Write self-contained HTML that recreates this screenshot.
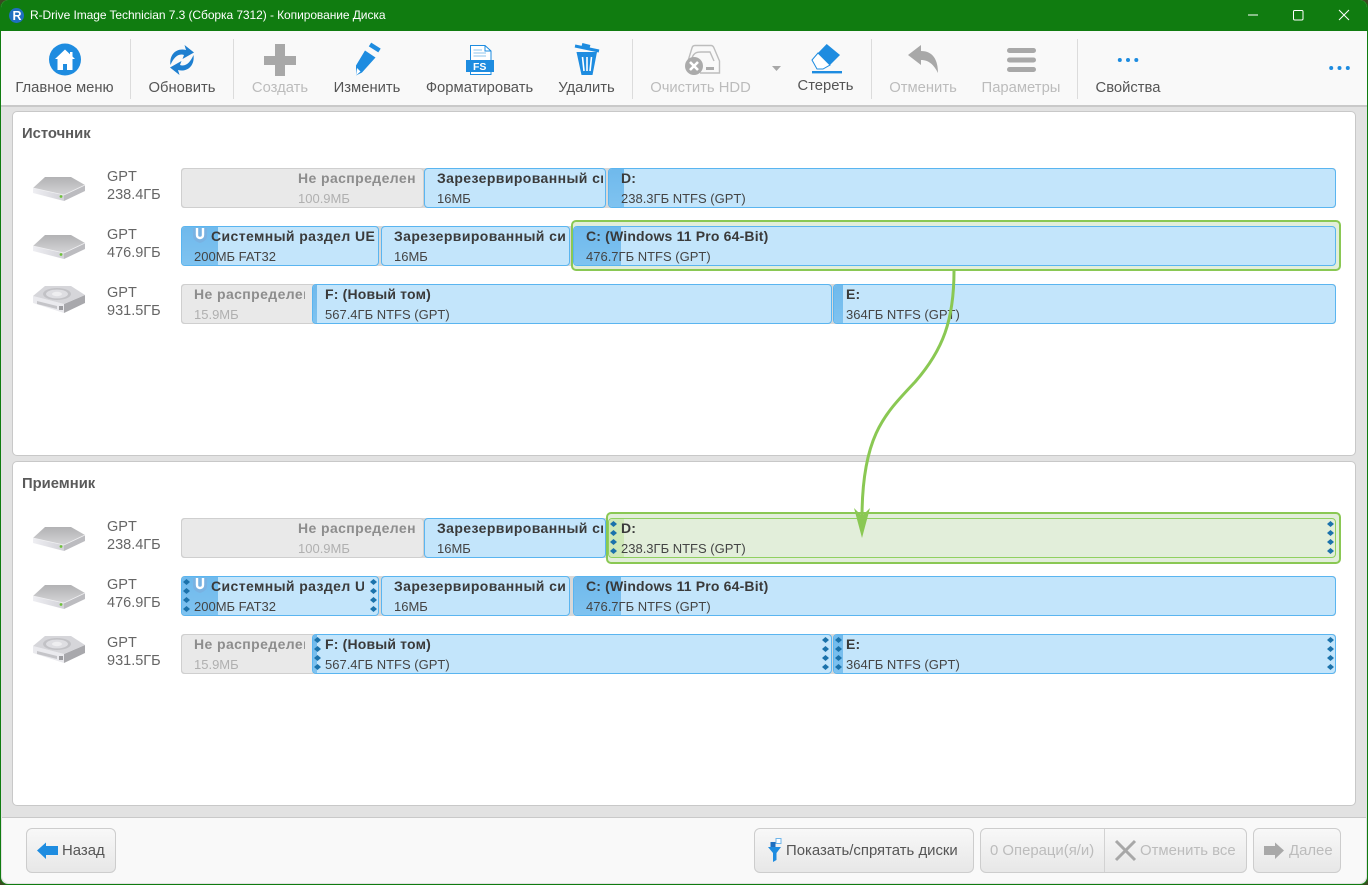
<!DOCTYPE html>
<html lang="ru"><head><meta charset="utf-8"><title>R-Drive Image Technician</title>
<style>
*{box-sizing:border-box}
html,body{margin:0;padding:0;width:1368px;height:885px;overflow:hidden;background:#3a4a20}
body{font:14px "Liberation Sans",sans-serif;color:#555;position:relative}
#win{position:absolute;inset:0;background:#e2e2e2;border-radius:8px;overflow:hidden;border:solid #107c10;border-width:0 1.5px 1.5px 1.5px}
.a{position:absolute}
#title{left:-2px;top:0;width:1372px;height:31px;background:#107c10}
#tt{left:30px;top:8px;color:#fff;font-size:12px;line-height:15px;white-space:nowrap;letter-spacing:-.07px}
#tb{left:-2px;top:31px;width:1372px;height:76px;background:#f9f9f9;border-bottom:2px solid #c9c9c9}
.sep{position:absolute;top:39px;width:1px;height:60px;background:#dcdcdc}
.lb{position:absolute;top:79px;height:18px;line-height:18px;text-align:center;white-space:nowrap;font-size:14.8px;color:#555;transform:translateX(-50%)}
.dis{color:#bcbcbc}
.panel{position:absolute;left:12px;width:1344px;background:#fff;border:1px solid #c8c8c8;border-radius:5px}
.h{position:absolute;left:22px;font-weight:bold;font-size:14.8px;color:#5a5a5a;line-height:16px}
.di{position:absolute;left:107px;font-size:14.5px;line-height:18px;color:#666;white-space:nowrap}
.trk{position:absolute;left:180px;width:1155px;height:40px;background:#d8d8d8;border-radius:3px}
.p{position:absolute;height:40px;background:#c3e5fb;border:1px solid #5ab5f0;border-radius:4px;overflow:hidden}
.p.u{background:#e9e9e9;border-color:#cfcfcf}
.p.g{background:#e2eeda;border-color:#90d060}
.f{position:absolute;left:0;top:0;bottom:0;background:linear-gradient(#6fb9ec,#7fc3f0)}
.g .f{background:#cfe8b8}
.n,.s{position:absolute;white-space:nowrap;overflow:hidden;line-height:17px}
.n{top:1px;font-size:14px;font-weight:bold;color:#3a3a3a;letter-spacing:.17px}
.n.w{letter-spacing:.4px}
.s{top:21px;font-size:13px;color:#444}
.u .n{color:#8d8d8d}.u .s{color:#b0b0b0}
.sel{position:absolute;border:2.5px solid #8ac853;border-radius:5px;background:#e2eeda}
.btn{position:absolute;top:828px;height:45px;border:1px solid #cdcdcd;border-radius:6px;background:linear-gradient(#f8f8f8,#e7e7e7);font-size:14.9px;line-height:45px;white-space:nowrap;color:#555}
.btn.dis{color:#bcbcbc}
.t{position:absolute;top:0}
svg{position:absolute;overflow:visible}
</style></head><body>
<svg width="0" height="0" style="position:absolute"><defs>
<linearGradient id="gt" x1="0" y1="0" x2="0" y2="1"><stop offset="0" stop-color="#b2b2b4"/><stop offset="1" stop-color="#d4d4d6"/></linearGradient>
<linearGradient id="gf" x1="0" y1="0" x2="1" y2="0"><stop offset="0" stop-color="#eeeef2"/><stop offset="1" stop-color="#d2d2d8"/></linearGradient>
<symbol id="hd" viewBox="0 0 53 25" width="53" height="25">
<path d="M0 11 31 18V24L0 16Z" fill="url(#gf)"/>
<path d="M31 18 52 8V14L31 24Z" fill="#bcbcc0"/>
<path d="M12 0H38L52 8 31 18 0 11Z" fill="url(#gt)"/>
<path d="M0 11 31 18 52 8" fill="none" stroke="#f0f0f2" stroke-width=".8"/>
<circle cx="28" cy="19.5" r="1.4" fill="#6fc23a"/>
</symbol>
<symbol id="hd2" viewBox="0 0 53 28" width="53" height="28">
<path d="M0 10 31 18V27L0 17Z" fill="#eaeaee"/>
<path d="M31 18 52 9V17L31 27Z" fill="#a8a8ac"/>
<path d="M12 0H38L52 9 31 18 0 10Z" fill="#d6d6da"/>
<ellipse cx="24" cy="8" rx="14" ry="6" fill="#c2c2c6"/>
<ellipse cx="24" cy="8" rx="11" ry="4.4" fill="#dedee2"/>
<ellipse cx="24" cy="8" rx="5" ry="2.2" fill="#eeeef0"/>
<path d="M4 15 24 20V23L4 18Z" fill="#c4c4c8"/>
<rect x="26" y="20" width="4" height="4" fill="#9c9ca0"/>
</symbol>
<symbol id="dt" viewBox="0 0 7 36" width="7" height="36">
<g fill="#1b72ab"><path d="M3.5 0 7 3 3.5 6 0 3Z"/><path d="M3.5 9 7 12 3.5 15 0 12Z"/><path d="M3.5 18 7 21 3.5 24 0 21Z"/><path d="M3.5 27 7 30 3.5 33 0 30Z"/></g>
</symbol>
<symbol id="sh" viewBox="0 0 14 15" width="14" height="15">
<path d="M0 0H14V8C14 12 10 14 7 15 4 14 0 12 0 8Z" fill="#79b2e2"/>
<path d="M4 0V7C4 11 10 11 10 7V0" fill="none" stroke="#fff" stroke-width="2.4"/>
</symbol>
</defs></svg>

<div id="win">
<div class="a" id="title"></div>
<div class="a" id="tb"></div>
</div>

<!-- title -->
<svg style="left:0;top:0" width="1368" height="31">
<circle cx="16.5" cy="15.5" r="7.5" fill="#1f6fc0"/><text x="12.5" y="20" font-family="Liberation Sans" font-weight="bold" font-size="12.5" fill="#fff">R</text>
<path d="M1248 15H1258" stroke="#fff" stroke-width="1"/>
<rect x="1293.5" y="10.5" width="9.5" height="9.5" rx="1.2" fill="none" stroke="#fff"/>
<path d="M1339 10 1349 20M1349 10 1339 20" stroke="#fff"/>
</svg>
<div class="a" id="tt">R-Drive Image Technician 7.3 (Сборка 7312) - Копирование Диска</div>

<!-- toolbar -->
<div class="sep" style="left:130px"></div><div class="sep" style="left:233px"></div><div class="sep" style="left:632px"></div><div class="sep" style="left:871px"></div><div class="sep" style="left:1077px"></div>
<svg style="left:0;top:0" width="1368" height="100">
<circle cx="65" cy="59.5" r="16" fill="#1e8ce0"/>
<path d="M65 49.5 55 59H57.5V70H63V64H67V70H72.5V59H75L72.5 56.5V52H70V54.2Z" fill="#fff"/>
<g fill="#1e7fd0"><path id="ra" d="M170.5 65C169 54 177 47.5 186 50L184.5 45 194 52.5 182.5 59 184 55C178 53 173.5 58 170.5 65Z"/><use href="#ra" transform="rotate(180 182 60)"/></g>
<path d="M275 44H285V56H296V65H285V76H275V65H264V56H275Z" fill="#a8a8a8"/>
<path d="M365 50.5 375.5 57.5 362 72.5 356 75.5 356 65.5Z" fill="#1e8ce0"/>
<path d="M357 68 360.5 71.5 356 75.5Z" fill="#fff"/>
<path d="M370 44.5 379.5 50.5" stroke="#1e8ce0" stroke-width="4.5"/>
<path d="M470.5 60V45.5H485L491 51V60M470.5 72V74.5H491V72" fill="#fff" stroke="#1e8ce0"/>
<path d="M485 45.5V51H491" fill="none" stroke="#1e8ce0"/>
<path d="M473.5 50H482M473.5 53H486M473.5 56H486" stroke="#8cc4ee"/>
<rect x="466" y="60" width="28" height="12" fill="#1e8ce0"/>
<text x="473" y="70" font-family="Liberation Sans" font-weight="bold" font-size="10.5" fill="#fff">FS</text>
<path d="M575 46 599 51" stroke="#1e8ce0" stroke-width="3"/><path d="M582 44.5 590 46.5" stroke="#1e8ce0" stroke-width="3"/>
<path d="M576.5 52H597L592.5 75H581.5Z" fill="#1e8ce0"/>
<path d="M582.5 57 584 71M587 57V71M591.5 57 590 71" stroke="#fff" stroke-width="1.6"/>
<path d="M688 61 692 48Q692.5 45.5 695 45.5H711Q713 45.5 714 48L719.5 61V73H700M692 58C694 52 698 52 701 52H710L714 61" fill="none" stroke="#bdbdbd" stroke-width="1.4"/>
<circle cx="694" cy="66" r="9" fill="#ababab"/>
<path d="M690 62 698 70M698 62 690 70" stroke="#fff" stroke-width="2.6"/>
<rect x="706" y="67" width="8" height="3" fill="#ababab"/>
<path d="M772 66H781L776.5 71Z" fill="#a8a8a8"/>
<path d="M826.7 44 840 55 830 65 818 53Z" fill="#1e8ce0"/>
<path d="M812 60 818 53 830 65 823 69H817Z" fill="#fff" stroke="#1e8ce0"/>
<rect x="812" y="71" width="30" height="2.4" fill="#1e8ce0"/>
<path d="M908 55 921 45V51C933 51 938 60 938 73 934 65 929 60 921 60V65Z" fill="#a8a8a8"/>
<rect x="1007" y="48" width="29" height="5" rx="2.5" fill="#a8a8a8"/><rect x="1007" y="57.5" width="29" height="5" rx="2.5" fill="#a8a8a8"/><rect x="1007" y="67" width="29" height="5" rx="2.5" fill="#a8a8a8"/>
<g fill="#1e8ce0"><circle cx="1119.8" cy="60" r="2"/><circle cx="1128" cy="60" r="2"/><circle cx="1136.3" cy="60" r="2"/><circle cx="1331.2" cy="68" r="2"/><circle cx="1339.5" cy="68" r="2"/><circle cx="1347.8" cy="68" r="2"/></g>
</svg>
<div class="lb" style="left:64.5px">Главное меню</div>
<div class="lb" style="left:182px">Обновить</div>
<div class="lb dis" style="left:280px">Создать</div>
<div class="lb" style="left:367px">Изменить</div>
<div class="lb" style="left:479.5px">Форматировать</div>
<div class="lb" style="left:586.5px">Удалить</div>
<div class="lb dis" style="left:700.5px">Очистить HDD</div>
<div class="lb" style="left:825.5px;top:77px">Стереть</div>
<div class="lb dis" style="left:923px">Отменить</div>
<div class="lb dis" style="left:1021px">Параметры</div>
<div class="lb" style="left:1128px">Свойства</div>

<!-- source panel -->
<div class="panel" style="top:111px;height:345px"></div>
<div class="h" style="top:126px">Источник</div>
<svg style="left:33px;top:177px" width="53" height="25"><use href="#hd"/></svg>
<svg style="left:33px;top:235px" width="53" height="25"><use href="#hd"/></svg>
<svg style="left:33px;top:286px" width="53" height="28"><use href="#hd2"/></svg>
<div class="di" style="top:168px">GPT<br>238.4ГБ</div>
<div class="di" style="top:226px">GPT<br>476.9ГБ</div>
<div class="di" style="top:284px">GPT<br>931.5ГБ</div>

<div class="trk" style="top:168px;left:181px"></div>
<div class="p u" style="left:181px;top:168px;width:243px"><div class="n w" style="left:116px;width:119px">Не распределен</div><div class="s" style="left:116px">100.9МБ</div></div>
<div class="p" style="left:424px;top:168px;width:182px"><div class="n w" style="left:12px;width:166px">Зарезервированный си</div><div class="s" style="left:12px">16МБ</div></div>
<div class="p" style="left:608px;top:168px;width:728px"><div class="f" style="width:15px"></div><div class="n" style="left:12px">D:</div><div class="s" style="left:12px">238.3ГБ NTFS (GPT)</div></div>

<div class="trk" style="top:226px;left:181px"></div>
<div class="sel" style="left:571px;top:220px;width:770px;height:51px"></div>
<div class="p" style="left:181px;top:226px;width:198px"><div class="f" style="width:36px"></div><div class="n w" style="left:29px;width:164px">Системный раздел UEFI</div><div class="s" style="left:12px">200МБ FAT32</div></div>
<svg style="left:193px;top:228px" width="14" height="15"><use href="#sh"/></svg>
<div class="p" style="left:381px;top:226px;width:189px"><div class="n w" style="left:12px;width:172px">Зарезервированный сис</div><div class="s" style="left:12px">16МБ</div></div>
<div class="p" style="left:573px;top:226px;width:763px"><div class="f" style="width:47px"></div><div class="n" style="left:12px">C: (Windows 11 Pro 64-Bit)</div><div class="s" style="left:12px">476.7ГБ NTFS (GPT)</div></div>

<div class="trk" style="top:284px;left:181px"></div>
<div class="p u" style="left:181px;top:284px;width:134px"><div class="n w" style="left:12px;width:111px">Не распределен</div><div class="s" style="left:12px">15.9МБ</div></div>
<div class="p" style="left:312px;top:284px;width:520px"><div class="f" style="width:4px"></div><div class="n" style="left:12px">F: (Новый том)</div><div class="s" style="left:12px">567.4ГБ NTFS (GPT)</div></div>
<div class="p" style="left:833px;top:284px;width:503px"><div class="f" style="width:9px"></div><div class="n" style="left:12px">E:</div><div class="s" style="left:12px">364ГБ NTFS (GPT)</div></div>

<!-- target panel -->
<div class="panel" style="top:461px;height:345px"></div>
<div class="h" style="top:476px">Приемник</div>
<svg style="left:33px;top:527px" width="53" height="25"><use href="#hd"/></svg>
<svg style="left:33px;top:585px" width="53" height="25"><use href="#hd"/></svg>
<svg style="left:33px;top:636px" width="53" height="28"><use href="#hd2"/></svg>
<div class="di" style="top:518px">GPT<br>238.4ГБ</div>
<div class="di" style="top:576px">GPT<br>476.9ГБ</div>
<div class="di" style="top:634px">GPT<br>931.5ГБ</div>

<div class="trk" style="top:518px;left:181px"></div>
<div class="sel" style="left:606px;top:512px;width:735px;height:51.5px"></div>
<div class="p u" style="left:181px;top:518px;width:243px"><div class="n w" style="left:116px;width:119px">Не распределен</div><div class="s" style="left:116px">100.9МБ</div></div>
<div class="p" style="left:424px;top:518px;width:182px"><div class="n w" style="left:12px;width:166px">Зарезервированный си</div><div class="s" style="left:12px">16МБ</div></div>
<div class="p g" style="left:608px;top:518px;width:728px"><div class="f" style="width:15px"></div><div class="n" style="left:12px">D:</div><div class="s" style="left:12px">238.3ГБ NTFS (GPT)</div></div>

<div class="trk" style="top:576px;left:181px"></div>
<div class="p" style="left:181px;top:576px;width:198px"><div class="f" style="width:36px"></div><div class="n w" style="left:29px;width:153px">Системный раздел UEFI</div><div class="s" style="left:12px">200МБ FAT32</div></div>
<svg style="left:193px;top:578px" width="14" height="15"><use href="#sh"/></svg>
<div class="p" style="left:381px;top:576px;width:189px"><div class="n w" style="left:12px;width:172px">Зарезервированный сис</div><div class="s" style="left:12px">16МБ</div></div>
<div class="p" style="left:573px;top:576px;width:763px"><div class="f" style="width:47px"></div><div class="n" style="left:12px">C: (Windows 11 Pro 64-Bit)</div><div class="s" style="left:12px">476.7ГБ NTFS (GPT)</div></div>

<div class="trk" style="top:634px;left:181px"></div>
<div class="p u" style="left:181px;top:634px;width:134px"><div class="n w" style="left:12px;width:111px">Не распределен</div><div class="s" style="left:12px">15.9МБ</div></div>
<div class="p" style="left:312px;top:634px;width:520px"><div class="f" style="width:4px"></div><div class="n" style="left:12px">F: (Новый том)</div><div class="s" style="left:12px">567.4ГБ NTFS (GPT)</div></div>
<div class="p" style="left:833px;top:634px;width:503px"><div class="f" style="width:9px"></div><div class="n" style="left:12px">E:</div><div class="s" style="left:12px">364ГБ NTFS (GPT)</div></div>

<svg style="left:609.5px;top:521px" width="7" height="36"><use href="#dt"/></svg>
<svg style="left:1326.5px;top:521px" width="7" height="36"><use href="#dt"/></svg>
<svg style="left:182.5px;top:579px" width="7" height="36"><use href="#dt"/></svg>
<svg style="left:369.5px;top:579px" width="7" height="36"><use href="#dt"/></svg>
<svg style="left:313.5px;top:637px" width="7" height="36"><use href="#dt"/></svg>
<svg style="left:821.5px;top:637px" width="7" height="36"><use href="#dt"/></svg>
<svg style="left:834.5px;top:637px" width="7" height="36"><use href="#dt"/></svg>
<svg style="left:1326.5px;top:637px" width="7" height="36"><use href="#dt"/></svg>

<!-- arrow -->
<svg style="left:0;top:0" width="1368" height="885">
<path d="M954 271C954 320 943 350 915 382 885 414 862 435 862 518" fill="none" stroke="#8ac853" stroke-width="3"/>
<path d="M854 508 862 516 870 508 862 538Z" fill="#8ac853"/>
</svg>

<!-- bottom -->
<div class="a" style="left:2px;top:817px;width:1364px;height:66px;background:#f9f9f9;border-top:1px solid #c9c9c9;border-radius:0 0 7px 7px"></div>
<div class="btn" style="left:26px;width:90px"><span class="t" style="left:35px">Назад</span></div>
<div class="btn" style="left:754px;width:220px"><span class="t" style="left:31px">Показать/спрятать диски</span></div>
<div class="btn dis" style="left:980px;width:267px"><span class="t" style="left:9px">0 Операци(я/и)</span><span class="a" style="left:123px;top:0;height:43px;width:1px;background:#d2d2d2"></span><span class="t" style="left:159px">Отменить все</span></div>
<div class="btn dis" style="left:1253px;width:88px"><span class="t" style="left:35px">Далее</span></div>
<svg style="left:0;top:0" width="1368" height="885">
<path d="M37 850.5 46 842.5V846H58V855H46V859Z" fill="#1e8ce0"/>
<path d="M768 847H781L776.5 853V860L773 862V853Z" fill="#1e8ce0"/>
<rect x="770.5" y="842" width="5" height="5" fill="#1e6fc0"/><rect x="776" y="838.5" width="5" height="5" fill="#fff" stroke="#6fb5ea"/>
<path d="M1116 841 1135 860M1135 841 1116 860" stroke="#a8a8a8" stroke-width="3"/>
<path d="M1284 850.5 1275 842.5V846H1264V855H1275V859Z" fill="#a8a8a8"/>
</svg>
</body></html>
